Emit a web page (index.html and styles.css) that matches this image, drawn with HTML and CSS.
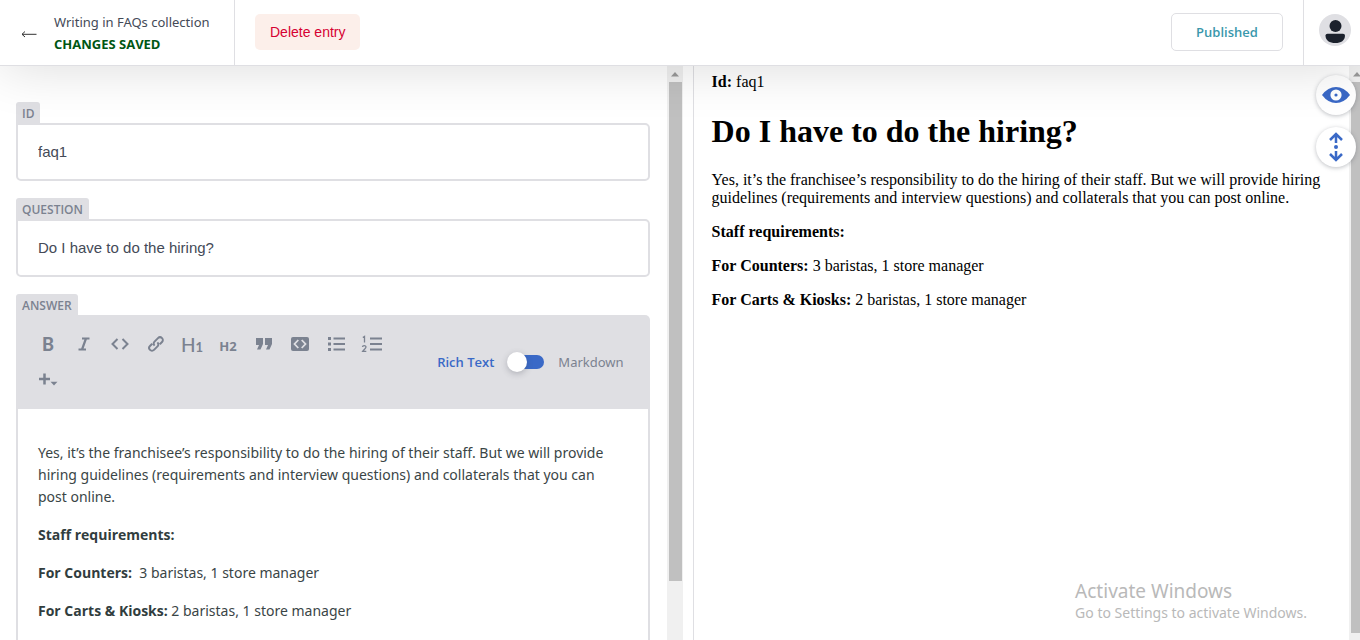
FILE: index.html
```html
<!DOCTYPE html>
<html lang="en">
<head>
<meta charset="utf-8">
<title>Writing in FAQs collection</title>
<link rel="stylesheet" href="styles.css">
</head>
<body>
<div class="app">
  <header class="topbar">
    <a class="back" href="#">
      <svg class="back-arrow" width="18" height="14" viewBox="0 0 18 14" aria-hidden="true"><path d="M2 8.300H16.500M5 5.500L2 8.300 5 11" fill="none" stroke="#333" stroke-width="1"/></svg>
      <span class="back-text">
        <span class="back-title">Writing in FAQs collection</span>
        <span class="back-status">CHANGES SAVED</span>
      </span>
    </a>
    <div class="actions">
      <button class="delete" type="button">Delete entry</button>
      <button class="published" type="button">Published</button>
    </div>
    <div class="account">
      <button class="avatar" type="button" aria-label="Account">
        <svg width="32" height="32" viewBox="0 0 32 32" aria-hidden="true"><circle cx="16.500" cy="12" r="6" fill="#1b212c"/><path d="M6.500 21.500Q6.500 19.800 8.500 19.800H24Q26 19.800 26 21.500C26 26.500 22 29 16.300 29S6.500 26.500 6.500 21.500Z" fill="#1b212c"/></svg>
      </button>
    </div>
  </header>

  <main class="panes">
    <section class="editor-pane">
      <form class="form">
        <div class="field">
          <label class="field-label" for="id">ID</label>
          <input class="field-input" id="id" type="text" value="faq1">
        </div>
        <div class="field">
          <label class="field-label" for="question">QUESTION</label>
          <input class="field-input" id="question" type="text" value="Do I have to do the hiring?">
        </div>
        <div class="field">
          <span class="field-label" id="answer-label">ANSWER</span>
          <div class="toolbar">
            <div class="tools">
              <button class="tool" type="button" aria-label="Bold"><span class="glyph-b">B</span></button>
              <button class="tool" type="button" aria-label="Italic"><svg width="14" height="16" viewBox="0 0 14 16"><path d="M5 2.500H12.500M1.500 13.500H9M9 2.500L5 13.500" fill="none" stroke="#7b8290" stroke-width="2.200"/></svg></button>
              <button class="tool" type="button" aria-label="Code"><svg width="20" height="16" viewBox="0 0 20 16"><path class="line" d="M7.500 3L2.500 8l5 5M12.500 3l5 5-5 5"/></svg></button>
              <button class="tool" type="button" aria-label="Link"><svg width="18" height="18" viewBox="0 0 18 18"><path class="line" d="M7.600 10.600C6.300 9.300 6.400 7.700 7.500 6.600L11 3.100C12.200 1.900 13.900 2 15 3.100s1.100 2.800 0 3.900L12.800 9.200M10.400 7.400c1.300 1.300 1.200 2.900.1 4L7 14.900c-1.200 1.200-2.900 1.100-4 0s-1.100-2.800 0-3.900L5.200 8.800"/></svg></button>
              <button class="tool" type="button" aria-label="Header 1"><span class="glyph-h1">H<small class="level">1</small></span></button>
              <button class="tool" type="button" aria-label="Header 2"><span class="glyph-h2">H2</span></button>
              <button class="tool" type="button" aria-label="Quote"><svg width="18" height="14" viewBox="0 0 18 14"><path class="solid" d="M1 1h7v6L5.500 12.500H2L4 8H1zM10 1h7v6l-2.500 5.500H11L13 8h-3z"/></svg></button>
              <button class="tool" type="button" aria-label="Code block"><svg width="18" height="14" viewBox="0 0 18 14"><rect class="solid" width="18" height="14" rx="2"/><path d="M7.300 3L3.500 7l3.800 4M10.700 3l3.800 4-3.800 4" fill="none" stroke="#dfdfe3" stroke-width="1.800"/></svg></button>
              <button class="tool" type="button" aria-label="Bulleted list"><svg width="18" height="16" viewBox="0 0 18 16"><path class="line" d="M6.500 2.500H18M6.500 8H18M6.500 13.500H18"/><path class="solid" d="M1 1h3v3H1zM1 6.500h3v3H1zM1 12h3v3H1z"/></svg></button>
              <button class="tool" type="button" aria-label="Numbered list"><svg width="22" height="18" viewBox="0 0 22 18"><path class="line" d="M9 3.500H21M9 9H21M9 14.500H21"/><path d="M1.800 2.500L3.500 1.500V7.500M1.500 12C1.500 10.200 5 10.200 5 12 5 13.500 3 14.500 1.700 16.300H5.300" fill="none" stroke="#7b8290" stroke-width="1.300"/></svg></button>
              <button class="tool" type="button" aria-label="Add component"><svg width="20" height="16" viewBox="0 0 20 16"><path d="M1 7h11M6.500 1.500v11" fill="none" stroke="#7b8290" stroke-width="2.500"/><path class="solid" d="M12.500 9.800h7L16 13.500z"/></svg></button>
            </div>
            <div class="mode">
              <span class="mode-on">Rich Text</span>
              <input class="switch" type="checkbox" role="switch" aria-label="Markdown mode">
              <span class="mode-off">Markdown</span>
            </div>
          </div>
          <div class="rich" contenteditable="true" spellcheck="false" role="textbox" aria-labelledby="answer-label">
            <p class="rich-p">Yes, it’s the franchisee’s responsibility to do the hiring of their staff. But we will provide hiring guidelines (requirements and interview questions) and collaterals that you can post online.</p>
            <p class="rich-p"><b>Staff requirements:</b></p>
            <p class="rich-p"><b>For Counters:</b>&nbsp; 3 baristas, 1 store manager</p>
            <p class="rich-p"><b>For Carts &amp; Kiosks:</b> 2 baristas, 1 store manager</p>
          </div>
        </div>
      </form>
      <div class="scrollbar" aria-hidden="true">
        <svg class="scroll-up" width="16" height="16" viewBox="0 0 16 16"><path d="M4 10.500L8 6l4 4.500z" fill="#999"/></svg>
        <div class="thumb"></div>
      </div>
    </section>

    <section class="preview-pane">
      <article class="preview">
        <div><b>Id:</b> faq1</div>
        <h1 class="preview-title">Do I have to do the hiring?</h1>
        <p class="preview-p">Yes, it’s the franchisee’s responsibility to do the hiring of their staff. But we will provide hiring guidelines (requirements and interview questions) and collaterals that you can post online.</p>
        <p class="preview-p"><b>Staff requirements:</b></p>
        <p class="preview-p"><b>For Counters:</b> 3 baristas, 1 store manager</p>
        <p class="preview-p"><b>For Carts &amp; Kiosks:</b> 2 baristas, 1 store manager</p>
      </article>
      <div class="scrollbar scrollbar-cut" aria-hidden="true">
        <svg class="scroll-up" width="16" height="16" viewBox="0 0 16 16"><path d="M4 10.500L8 6l4 4.500z" fill="#999"/></svg>
        <div class="thumb thumb-long"></div>
      </div>
      <div class="view-controls">
        <button class="round" type="button" aria-label="Toggle preview"><svg width="28" height="18" viewBox="0 0 28 18"><path d="M0 9Q6 1 14 1t14 8q-6 8-14 8T0 9z" fill="#3a69c7"/><circle cx="14" cy="9" r="3.600" fill="none" stroke="#fff" stroke-width="4"/></svg></button>
        <button class="round" type="button" aria-label="Sync scrolling"><svg width="16" height="30" viewBox="0 0 16 30"><path d="M8 11V2.500M2 8l6-6 6 6M8 19v8.500M2 22l6 6 6-6" fill="none" stroke="#3a69c7" stroke-width="2.500"/><circle cx="8" cy="15" r="2" fill="#3a69c7"/></svg></button>
      </div>
    </section>
  </main>

  <aside class="watermark">
    <div class="watermark-title">Activate Windows</div>
    <div>Go to Settings to activate Windows.</div>
  </aside>
</div>
</body>
</html>
```
FILE: styles.css
```css
* { box-sizing: border-box; }

body {
  margin: 0;
  background: #fff;
  color: #3a4546;
  font: 14px/22px "Noto Sans", "Open Sans", sans-serif;
}

button { padding: 0; border: 0; font: inherit; cursor: pointer; }

.app {
  position: relative;
  display: flex;
  flex-direction: column;
  height: 100vh;
  overflow: hidden;
}

/* Top bar */
.topbar {
  position: relative;
  z-index: 2;
  display: flex;
  flex: none;
  height: 66px;
  background: #fff;
  border-bottom: 1px solid #dfdfe3;
  box-shadow: 0 2px 54px rgba(0, 0, 0, 0.14);
}

.back {
  display: flex;
  align-items: center;
  gap: 16px;
  min-width: 235px;
  padding: 0 20px;
  border-right: 1px solid #dfdfe3;
  color: #444a57;
  font-size: 13px;
  text-decoration: none;
}
.back-text, .back-title, .back-status { display: block; }
.back-status { color: #005614; font-family: "Open Sans", sans-serif; font-weight: 700; }

.actions {
  display: flex;
  flex: 1;
  align-items: center;
  justify-content: space-between;
  padding: 0 20px 2px;
}
.delete {
  height: 36px;
  padding: 0 15px;
  border-radius: 5px;
  background: #fcefea;
  color: #d60032;
  font: 14px "Liberation Sans", Arial, sans-serif;
}
.published {
  width: 112px;
  height: 38px;
  border: 1px solid #dfdfe3;
  border-radius: 5px;
  background: #fff;
  color: #3a98ac;
  font-family: "Open Sans", sans-serif;
  font-size: 13px;
  font-weight: 600;
}
.account {
  display: flex;
  align-items: flex-start;
  width: 57px;
  padding: 14px 15px;
  border-left: 1px solid #dfdfe3;
}
.avatar {
  width: 32px;
  height: 32px;
  flex: none;
  border-radius: 50%;
  background: #dfdfe3;
}
.avatar svg { display: block; }

/* Panes */
.panes { display: flex; flex: 1; min-height: 0; }

.editor-pane {
  display: flex;
  flex: none;
  width: 51%;
  padding-right: 10px;
  border-right: 1px solid #dfdfe3;
}
.form {
  display: flex;
  flex: 1;
  flex-direction: column;
  gap: 17px;
  padding: 36px 17px 0 16px;
  overflow: hidden;
}
.field { flex: none; }
.field-label {
  display: block;
  width: fit-content;
  height: 21px;
  padding: 1px 6px 0;
  border-radius: 3px 3px 0 0;
  background: #dfdfe3;
  color: #7b8290;
  font-family: "Open Sans", sans-serif;
  font-size: 12px;
  font-weight: 600;
}
.field-input {
  display: block;
  width: 100%;
  height: 58px;
  padding: 0 20px 2px;
  border: 2px solid #dfdfe3;
  border-radius: 0 5px 5px 5px;
  background: #fff;
  color: #444a57;
  font: 15px "Liberation Sans", Arial, sans-serif;
  outline: 0;
}

.toolbar {
  display: flex;
  align-items: center;
  justify-content: space-between;
  padding: 11px 26px 11px 14px;
  border-radius: 0 5px 0 0;
  background: #dfdfe3;
}
.tools { display: flex; flex-wrap: wrap; max-width: 372px; }
.tool {
  display: flex;
  align-items: center;
  justify-content: center;
  width: 36px;
  height: 36px;
  background: none;
  color: #7b8290;
}
.line { fill: none; stroke: #7b8290; stroke-width: 2; }
.solid { fill: #7b8290; }
.glyph-b { font: 900 18px Lato, sans-serif; }
.glyph-h1 { font: 500 19px Lato, sans-serif; }
.glyph-h2 { padding-top: 4px; font: 700 13px "Noto Sans", sans-serif; }
.level { font-size: 13px; font-weight: 700; }

.mode {
  display: flex;
  flex: none;
  align-items: center;
  gap: 14px;
  color: #7b8290;
  font-size: 13px;
}
.mode-on { color: #3a69c7; font-family: "Open Sans", sans-serif; font-weight: 600; }
.switch {
  display: flex;
  align-items: center;
  width: 36px;
  height: 14px;
  margin: 0;
  border-radius: 7px;
  background: #3a69c7;
  appearance: none;
}
.switch::before {
  width: 20px;
  height: 20px;
  flex: none;
  margin-left: -1px;
  border-radius: 50%;
  background: #fff;
  box-shadow: 0 2px 6px rgba(68, 74, 87, 0.3);
  content: "";
}

.rich {
  padding: 33px 32px 33px 20px;
  border: 2px solid #dfdfe3;
  border-top: 0;
  outline: 0;
}
.rich-p { margin: 0 0 16px; }
.rich b { color: #313d3e; font-family: "Open Sans", sans-serif; }

/* Scrollbars */
.scrollbar {
  flex: none;
  width: 16px;
  padding: 0 1px 0 2px;
  background: #f0f0f0;
}
.scroll-up { display: block; margin-left: -2px; }
.thumb { height: 87%; background: #c0c0c0; }
.thumb-long { height: 96%; }
.scrollbar-cut { width: 11px; padding-right: 0; overflow: hidden; }

/* Preview */
.preview-pane { position: relative; display: flex; flex: 1; min-width: 0; }
.preview {
  flex: 1;
  padding: 7px 18px;
  color: #000;
  font: 16px/18px "Liberation Serif", "Times New Roman", serif;
}
.preview-title { margin: 22px 0; font-size: 32px; line-height: 36px; }
.preview-p { margin: 16px 0; }

.view-controls {
  position: absolute;
  top: 9px;
  right: 4px;
  display: grid;
  gap: 12px;
}
.round {
  display: flex;
  align-items: center;
  justify-content: center;
  width: 40px;
  height: 40px;
  border-radius: 50%;
  background: #fff;
  box-shadow: 0 1px 4px rgba(68, 74, 87, 0.35);
}

.watermark {
  position: absolute;
  right: 53px;
  bottom: 16px;
  z-index: 3;
  color: #b9b9b9;
}
.watermark-title { font-size: 19px; }
```
